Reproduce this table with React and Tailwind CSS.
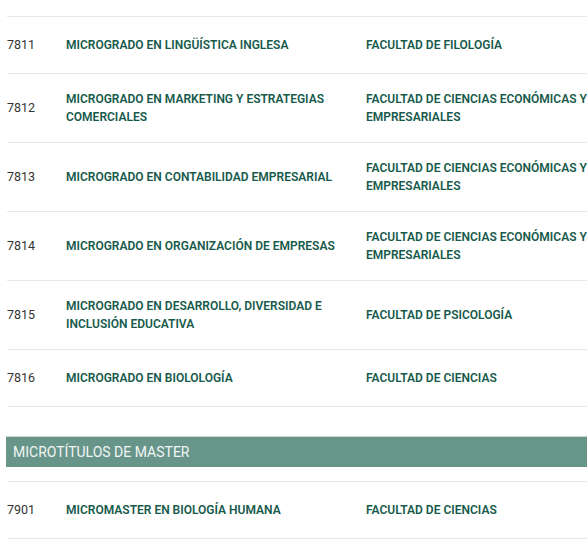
const grados = [
  { code: '7811', name: 'MICROGRADO EN LINGÜÍSTICA INGLESA', faculty: 'FACULTAD DE FILOLOGÍA' },
  { code: '7812', name: 'MICROGRADO EN MARKETING Y ESTRATEGIAS COMERCIALES', faculty: 'FACULTAD DE CIENCIAS ECONÓMICAS Y EMPRESARIALES' },
  { code: '7813', name: 'MICROGRADO EN CONTABILIDAD EMPRESARIAL', faculty: 'FACULTAD DE CIENCIAS ECONÓMICAS Y EMPRESARIALES' },
  { code: '7814', name: 'MICROGRADO EN ORGANIZACIÓN DE EMPRESAS', faculty: 'FACULTAD DE CIENCIAS ECONÓMICAS Y EMPRESARIALES' },
  { code: '7815', name: 'MICROGRADO EN DESARROLLO, DIVERSIDAD E INCLUSIÓN EDUCATIVA', faculty: 'FACULTAD DE PSICOLOGÍA' },
  { code: '7816', name: 'MICROGRADO EN BIOLOLOGÍA', faculty: 'FACULTAD DE CIENCIAS' },
];

const masters = [
  { code: '7901', name: 'MICROMASTER EN BIOLOGÍA HUMANA', faculty: 'FACULTAD DE CIENCIAS' },
];

const Row = ({ item }) => (
  <div className="flex items-center min-h-[57px] py-4 border-b border-[#e8e8e8] text-[12px] leading-[18px]">
    <div className="w-[59px] shrink-0 text-[#333] text-[12.5px]">{item.code}</div>
    <div className="w-[300px] shrink-0 pr-[16px] font-semibold text-[#175a4c]">{item.name}</div>
    <div className="w-[226px] shrink-0 font-semibold text-[#175a4c]">{item.faculty}</div>
  </div>
);

export default function App() {
  return (
    <div className="w-[587px] h-[542px] overflow-hidden bg-white" style={{ fontFamily: 'Roboto, "Open Sans", sans-serif' }}>
      <div className="pt-[16px] pl-[7px] w-[620px]">
        {/* Micrograds */}
        <div className="border-t border-[#e8e8e8]">
          {grados.map((g) => (
            <Row key={g.code} item={g} />
          ))}
        </div>

        {/* Section header */}
        <div className="mt-[29px] -ml-px h-[31px] flex items-center pl-[7px] bg-[#67958a] border-t border-[#c9dad4] text-[#f2f5f4] text-[14px]">
          MICROTÍTULOS DE MASTER
        </div>

        <div className="mt-[14px] border-t border-[#e8e8e8]">
          {masters.map((m) => (
            <Row key={m.code} item={m} />
          ))}
        </div>
      </div>
    </div>
  );
}
